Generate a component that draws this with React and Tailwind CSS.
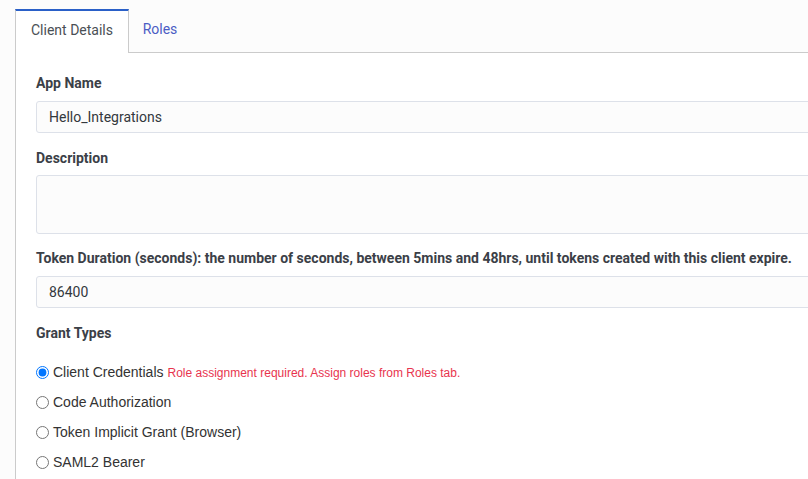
import React, { useState } from 'react';

const grantTypes = [
  'Client Credentials',
  'Code Authorization',
  'Token Implicit Grant (Browser)',
  'SAML2 Bearer',
];

const App = () => {
  const [tab, setTab] = useState('details');
  const [appName, setAppName] = useState('Hello_Integrations');
  const [description, setDescription] = useState('');
  const [duration, setDuration] = useState('86400');
  const [grant, setGrant] = useState('Client Credentials');

  const inputClass =
    'w-[calc(100%+4px)] rounded-[3px] border border-[#dde1e9] bg-[#fcfcfc] px-3 text-[14px] text-[#33383d] outline-none';

  return (
    <div className="min-h-[479px] w-[808px] overflow-hidden bg-[#fcfcfc] pl-[15px] pt-[9px] font-['Roboto',sans-serif]">
      <div className="flex h-[44px] border-b border-[#cbcbcb]">
        <button
          type="button"
          onClick={() => setTab('details')}
          className="-mb-px w-[114px] border-x border-t-[2px] border-x-[#cbcbcb] border-t-[#2a60c8] bg-white pb-[4px] text-[14px] text-[#4a4f55]"
        >
          Client Details
        </button>
        <button
          type="button"
          onClick={() => setTab('roles')}
          className="w-[62px] pb-[3px] text-[14px] text-[#4b5cc4]"
        >
          Roles
        </button>
      </div>

      <div className="flex min-h-[430px] flex-col border-l border-[#cbcbcb] bg-white pl-[20px] pt-[22px]">
        <label className="text-[14px] font-bold leading-[17px] text-[#3b4047]">App Name</label>
        <input
          value={appName}
          onChange={(e) => setAppName(e.target.value)}
          className={`${inputClass} mt-[9px] h-[32px]`}
        />

        <label className="mt-[17px] text-[14px] font-bold leading-[17px] text-[#3b4047]">Description</label>
        <textarea
          value={description}
          onChange={(e) => setDescription(e.target.value)}
          className={`${inputClass} mt-[8px] h-[59px] resize-none py-2`}
        />

        <label className="mt-[16px] text-[14px] font-bold leading-[17px] text-[#3b4047]">
          Token Duration (seconds): the number of seconds, between 5mins and 48hrs, until tokens created with this client expire.
        </label>
        <input
          value={duration}
          onChange={(e) => setDuration(e.target.value)}
          className={`${inputClass} mt-[9px] h-[32px]`}
        />

        <label className="mt-[17px] text-[14px] font-bold leading-[17px] text-[#3b4047]">Grant Types</label>

        <div className="mt-[22px] flex flex-col gap-[13px] font-['Liberation_Sans',Arial,sans-serif]">
          {grantTypes.map((g) => (
            <label key={g} className="flex h-[17px] items-center text-[14px] text-[#333]">
              <input
                type="radio"
                name="grant"
                checked={grant === g}
                onChange={() => setGrant(g)}
                className="m-0 mr-[4px] h-[13px] w-[13px]"
              />
              {g}
              {g === 'Client Credentials' && grant === g && (
                <span className="ml-[4px] text-[12px] text-[#e8344e]">
                  Role assignment required. Assign roles from Roles tab.
                </span>
              )}
            </label>
          ))}
        </div>
      </div>
    </div>
  );
};

export default App;
